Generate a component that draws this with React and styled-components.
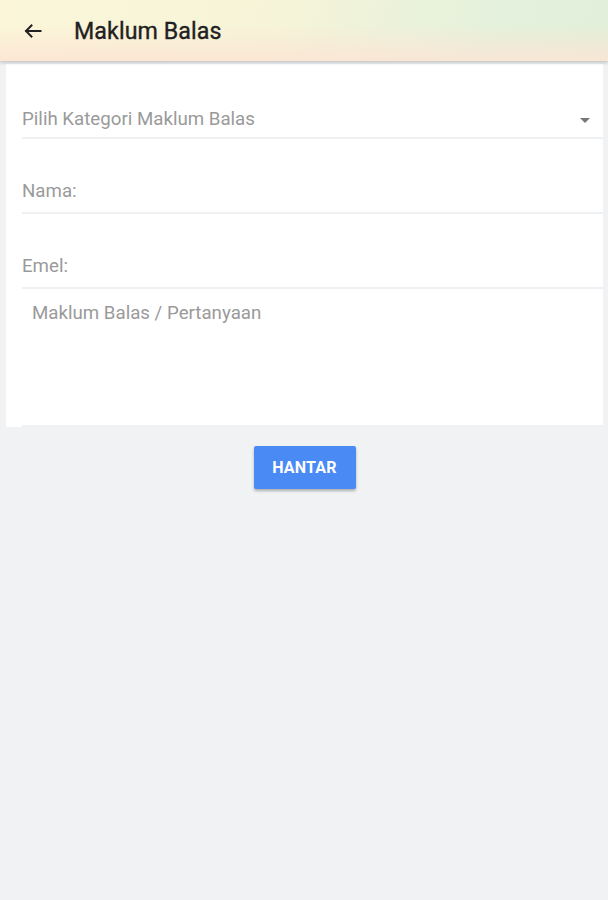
import React from "react";
import styled, { createGlobalStyle } from "styled-components";

const Global = createGlobalStyle`
  html, body { margin: 0; padding: 0; background: #f1f2f4; }
  body { font-family: Roboto, "Noto Sans", sans-serif; }
  * { box-sizing: border-box; }
`;

const Page = styled.div`
  width: 608px;
  min-height: 900px;
  background: #f1f2f4;
`;

const Header = styled.header`
  height: 61px;
  display: flex;
  align-items: center;
  padding-left: 22px;
  background:
    linear-gradient(to bottom, rgba(255,255,255,0) 40%, rgba(252,228,212,0.85) 100%),
    linear-gradient(100deg, #fbf6d9 0%, #f6f4d8 45%, #e4f1dc 80%, #e2efda 100%);
  box-shadow: 0 2px 3px rgba(0,0,0,0.18);
  position: relative;
  z-index: 1;
`;

const BackButton = styled.button`
  border: 0;
  background: transparent;
  padding: 0;
  width: 22px;
  height: 22px;
  display: flex;
  align-items: center;
  justify-content: center;
  color: #222;
  margin-top: 1px;
`;

const Title = styled.h1`
  margin: 0 0 0 30px;
  font-size: 23.2px;
  font-weight: 400;
  color: #212121;
  -webkit-text-stroke: 0.35px #212121;
  letter-spacing: 0.1px;
`;

const Content = styled.main`
  padding: 3px 5px 0 6px;
`;

const Card = styled.section`
  background: #fff;
  padding: 0 0 0 16px;
  display: flex;
  flex-direction: column;
`;

const Field = styled.div`
  display: flex;
  align-items: center;
  height: ${p => p.$h}px;
  padding-top: ${p => p.$pt || 0}px;
  border-bottom: 2px solid #eef0f1;
`;

const Placeholder = styled.span`
  flex: 1;
  font-size: 18.7px;
  color: #9a9a9a;
`;

const Caret = styled.span`
  width: 0;
  height: 0;
  border-left: 5px solid transparent;
  border-right: 5px solid transparent;
  border-top: 5px solid #777;
  margin-right: 13px;
  margin-top: 2px;
`;

const TextArea = styled.div`
  height: 138px;
  padding: 13px 0 0 10px;
  border-bottom: 2px solid #eef0f1;
`;

const Actions = styled.div`
  display: flex;
  justify-content: center;
  padding-top: 19px;
`;

const Submit = styled.button`
  width: 102px;
  height: 43px;
  border: 0;
  border-radius: 2px;
  background: #4a8af4;
  color: #fff;
  font-family: Roboto, sans-serif;
  font-size: 16px;
  font-weight: 700;
  letter-spacing: 0.2px;
  box-shadow: 0 2px 3px rgba(0,0,0,0.28);
`;

export default function App() {
  return (
    <Page>
      <Global />
      <Header>
        <BackButton aria-label="back">
          <svg width="20" height="20" viewBox="0 0 24 24" fill="none" stroke="#222" strokeWidth="2.4" strokeLinecap="square">
            <path d="M21 12H4" />
            <path d="M11 4.5 3.6 12l7.4 7.5" strokeLinejoin="miter" strokeLinecap="butt" />
          </svg>
        </BackButton>
        <Title>Maklum Balas</Title>
      </Header>
      <Content>
        <Card>
          <Field $h={75} $pt={37}>
            <Placeholder>Pilih Kategori Maklum Balas</Placeholder>
            <Caret />
          </Field>
          <Field $h={75} $pt={30}>
            <Placeholder>Nama:</Placeholder>
          </Field>
          <Field $h={75} $pt={30}>
            <Placeholder>Emel:</Placeholder>
          </Field>
          <TextArea>
            <Placeholder>Maklum Balas / Pertanyaan</Placeholder>
          </TextArea>
        </Card>
        <Actions>
          <Submit>HANTAR</Submit>
        </Actions>
      </Content>
    </Page>
  );
}
